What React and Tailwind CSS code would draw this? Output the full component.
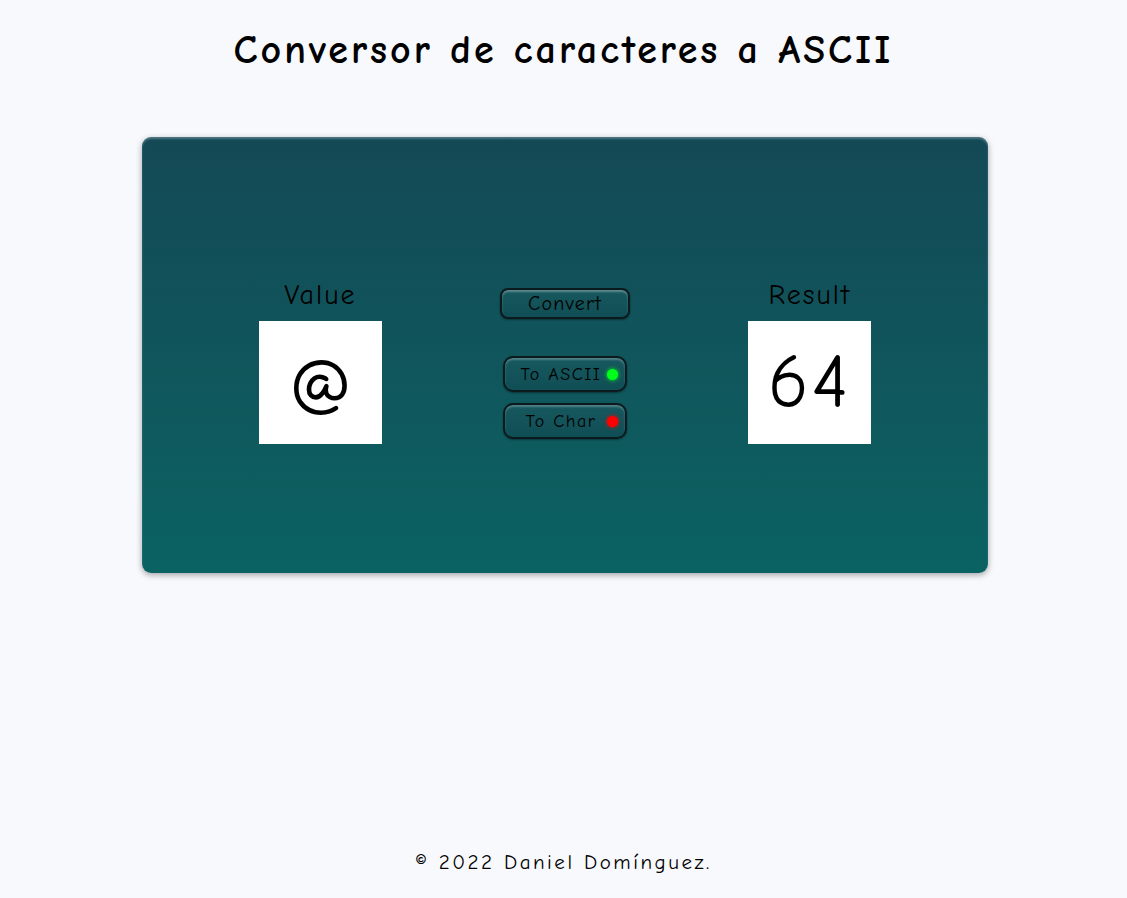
import React, { useState } from "react";

const font = "font-['Comic_Sans_MS','Comic_Neue','DejaVu_Sans',sans-serif]";

const ModeButton = ({ label, active, color, onClick }) => (
  <button
    onClick={onClick}
    className="w-[124px] h-[36px] flex items-center justify-between pl-[10px] pr-[7px] rounded-[10px] border-2 border-[#0b1a1d] bg-gradient-to-b from-[#17585f] to-[#0f4e54] shadow-[inset_0_2px_2px_rgba(255,255,255,0.25),0_1px_2px_rgba(0,0,0,0.4)] text-[18px] tracking-[1.5px] text-black"
  >
    <span className="flex-1 text-center">{label}</span>
    <span
      className={`w-[11px] h-[11px] rounded-full ${
        color === "green"
          ? "bg-[#00ff1a] shadow-[0_0_4px_#00ff1a]"
          : "bg-[#ff0000] shadow-[0_0_4px_#ff0000]"
      }`}
    />
  </button>
);

const App = () => {
  const [value] = useState("@");
  const [mode, setMode] = useState("ascii");
  const result = value ? value.charCodeAt(0) : "";

  return (
    <div className={`min-h-[898px] bg-[#f8f9fd] flex flex-col items-center text-black ${font}`}>
      <h1 className="pt-[24px] text-[40px] leading-[52px] font-bold tracking-[3px]">
        Conversor de caracteres a ASCII
      </h1>

      <div className="mt-[61px] ml-[3px] w-[846px] h-[436px] rounded-[9px] bg-gradient-to-b from-[#134955] to-[#0a6262] shadow-[inset_0_2px_2px_rgba(255,255,255,0.25),0_2px_6px_rgba(0,0,0,0.35)] pt-[140px] px-[56px]">
        <div className="grid grid-cols-3">
          <div className="flex flex-col items-center">
            <p className="text-[28px] leading-[36px] tracking-[2px]">Value</p>
            <div className="mt-[8px] w-[123px] h-[123px] bg-white flex items-center justify-center text-[76px]">
              {value}
            </div>
          </div>

          <div className="flex flex-col items-center">
            <button className="mt-[11px] w-[130px] h-[31px] rounded-[8px] border-2 border-[#0b1a1d] bg-gradient-to-b from-[#17585f] to-[#0f4e54] shadow-[inset_0_2px_2px_rgba(255,255,255,0.3),0_1px_2px_rgba(0,0,0,0.4)] text-[20px] tracking-[1.2px] leading-none">
              Convert
            </button>
            <div className="mt-[37px] flex flex-col gap-[11px]">
              <ModeButton label="To ASCII" color={mode === "ascii" ? "green" : "red"} onClick={() => setMode("ascii")} />
              <ModeButton label="To Char" color={mode === "char" ? "green" : "red"} onClick={() => setMode("char")} />
            </div>
          </div>

          <div className="flex flex-col items-center">
            <p className="text-[28px] leading-[36px] tracking-[2px]">Result</p>
            <div className="mt-[8px] w-[123px] h-[123px] bg-white flex items-center justify-center text-[76px] tracking-[3px]">
              {result}
            </div>
          </div>
        </div>
      </div>

      <footer className="mt-[274px] text-[21px] tracking-[2.5px]">
        © 2022 Daniel Domínguez.
      </footer>
    </div>
  );
};

export default App;
